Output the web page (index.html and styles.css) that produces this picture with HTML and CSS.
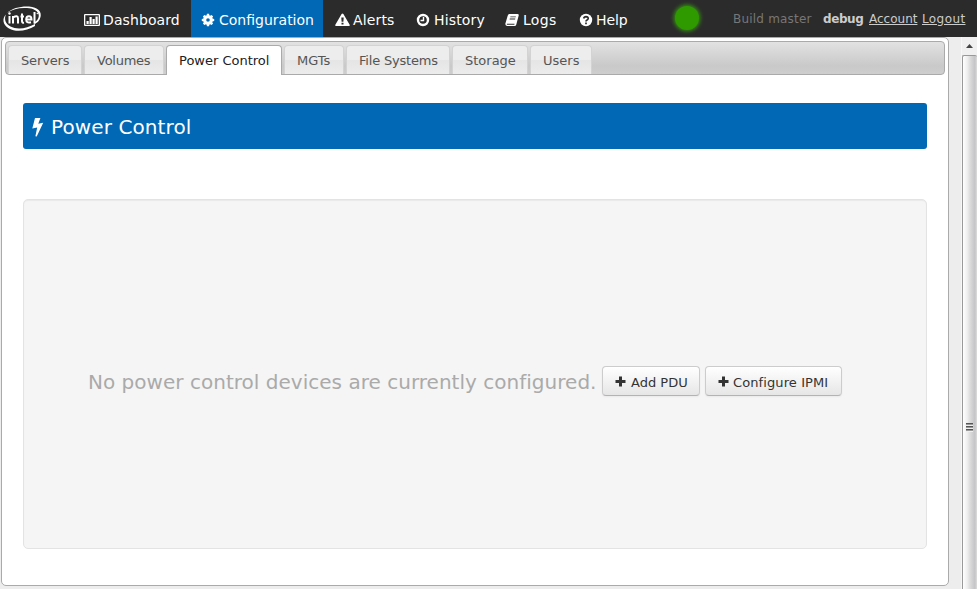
FILE: index.html
```html
<!DOCTYPE html>
<html lang="en">
<head>
<meta charset="utf-8">
<title>Power Control</title>
<link rel="stylesheet" href="styles.css">
</head>
<body>
<header class="navbar">
  <svg class="logo" viewBox="0 0 40 28" width="40" height="28">
    <path d="M5 8C10 3 19 1 27 1.500C36 2 40 7 38.500 12C37.500 16 35 18 32.500 19L32 17.500C35 16 36.500 14 36.800 11C37 6 31 3 25 3C17 2.500 11 4 5 8Z" fill="#fff"/>
    <path d="M4 9.500C0 13 .5 20 7 23.500C14 27.500 25 26 33 21L33 19C25 23.500 15 25 8.500 21.500C3 18.500 2 13.500 4 9.500Z" fill="#fff"/>
    <g fill="none" stroke="#fff" stroke-width="2"><path d="M7.500 11V18.500M11 18.500V11M11 12.500Q16 9.500 16 13.500V18.500M20 8.500V16Q20 18 22 17.700M18.500 11.500H22M24.500 14.500H29.500Q29.500 11.200 27 11.200Q24.200 11.200 24.200 14.500Q24.200 18.500 29 17.200M32.500 7V18.500"/></g><circle cx="7.500" cy="8.500" r="1.200" fill="#fff"/><circle cx="35.300" cy="8.500" r=".7" fill="#fff"/>
  </svg>
  <nav class="menu">
    <a class="item dashboard"><svg width="16" height="14" viewBox="0 0 16 14"><path fill="#fff" fill-rule="evenodd" d="M1 1H15Q16 1 16 2V12Q16 13 15 13H1Q0 13 0 12V2Q0 1 1 1ZM1.300 2.200V11.800H14.700V2.200ZM2.500 8H4.700V11H2.500ZM5.500 4H7.700V11H5.500ZM8.500 6H10.700V11H8.500ZM11.500 3.500H13.700V11H11.500Z"/></svg><span>Dashboard</span></a>
    <a class="item configuration active"><svg width="14" height="14" viewBox="0 0 14 14"><g fill="#fff"><path fill-rule="evenodd" d="M7 2.200A4.800 4.800 0 1 1 7 11.800A4.800 4.800 0 1 1 7 2.200ZM7 5.200A1.800 1.800 0 1 0 7 8.800A1.800 1.800 0 1 0 7 5.200Z"/><path d="M5.600 3L5.900 .8H8.100L8.400 3ZM5.600 11L5.900 13.200H8.100L8.400 11ZM3 5.600L.8 5.900V8.100L3 8.400ZM11 5.600L13.200 5.900V8.100L11 8.400ZM3.100 5.200L1.900 3.400L3.400 1.900L5.200 3.100ZM8.800 3.100L10.600 1.900L12.100 3.400L10.900 5.200ZM10.900 8.800L12.100 10.600L10.600 12.100L8.800 10.900ZM5.200 10.900L3.400 12.100L1.900 10.600L3.100 8.800Z"/></g></svg><span>Configuration</span></a>
    <a class="item alerts"><svg width="15" height="14" viewBox="0 0 15 14"><path fill="#fff" fill-rule="evenodd" d="M6.600 1Q7.500 0 8.400 1L14.800 12Q15 13 14 13H1Q0 13 .2 12ZM6.300 4.500L6.600 8.800H8.400L8.700 4.500ZM6.500 9.700V11.500H8.500V9.700Z"/></svg><span>Alerts</span></a>
    <a class="item history"><svg width="14" height="14" viewBox="0 0 14 14"><circle cx="7" cy="7" r="5" fill="none" stroke="#fff" stroke-width="2.400"/><path d="M7.500 4V7.500H4.500" fill="none" stroke="#fff" stroke-width="1.400"/></svg><span>History</span></a>
    <a class="item logs"><svg width="14" height="14" viewBox="0 0 14 14"><path fill="#fff" fill-rule="evenodd" d="M4 1H12.500Q14 1.200 13.700 2.500L11.300 11.500Q10.900 13 9.500 13H2Q0 12.500 .4 10.500L2.600 3Q3 1.300 4 1ZM5.400 3.500L5.200 4.300H10.700L10.900 3.500ZM4.800 5.600L4.600 6.400H10.100L10.300 5.600ZM1.900 10.700Q1.600 11.600 2.400 11.700H9.300L9.600 10.700Z"/></svg><span>Logs</span></a>
    <a class="item help"><svg width="14" height="14" viewBox="0 0 14 14"><circle cx="7" cy="7" r="6.200" fill="#fff"/><path d="M4.700 5.500Q5 3.600 7 3.600Q9.300 3.700 9.200 5.500Q9.100 6.300 8 7Q7 7.500 7 8.500M7 9.500V11.200" fill="none" stroke="#2b2b2b" stroke-width="1.700"/></svg><span>Help</span></a>
  </nav>
  <i class="status"></i>
  <div class="account"><span class="build">Build master</span><b class="user">debug</b><span class="acct"><a>Account</a></span><a class="logout">Logout</a></div>
</header>
<div class="viewport">
  <main class="panel">
    <div class="tabs">
      <a class="tab servers"><span>Servers</span></a>
      <a class="tab volumes"><span>Volumes</span></a>
      <a class="tab power selected"><span>Power Control</span></a>
      <a class="tab mgts"><span>MGTs</span></a>
      <a class="tab filesystems"><span>File Systems</span></a>
      <a class="tab storage"><span>Storage</span></a>
      <a class="tab users"><span>Users</span></a>
    </div>
    <h1 class="title"><svg width="12" height="20" viewBox="0 0 12 20"><path fill="#fff" d="M3 1H8.400L6.300 6.700L11.200 5.800L4.700 19.500L3.400 19.200L5.200 10.400L.3 11.400Z"/></svg><span>Power Control</span></h1>
    <section class="well">
      <span class="message">No power control devices are currently configured.</span>
      <button class="btn add"><svg width="11" height="11" viewBox="0 0 11 11"><path d="M5.500 .5V10.500M.5 5.500H10.500" stroke="#333" stroke-width="3"/></svg><span>Add PDU</span></button>
      <button class="btn ipmi"><svg width="11" height="11" viewBox="0 0 11 11"><path d="M5.500 .5V10.500M.5 5.500H10.500" stroke="#333" stroke-width="3"/></svg><span>Configure IPMI</span></button>
    </section>
  </main>
  <div class="scrollbar">
    <div class="arrow"><svg width="7" height="4" viewBox="0 0 7 4"><path d="M0 4L3.500 0L7 4Z" fill="#444"/></svg></div>
    <div class="thumb"><div class="grip"></div></div>
  </div>
</div>
</body>
</html>
```

FILE: styles.css
```css
* { box-sizing: border-box; }
body {
  margin: 0;
  width: 977px;
  height: 589px;
  overflow: hidden;
  background: #ededed;
  font: 13px/20px "DejaVu Sans", Verdana, sans-serif;
}
span, a, b { white-space: nowrap; }
svg { flex: none; display: block; }
.navbar { display: flex; height: 37px; background: #2b2b2b; }
.logo { margin: 5px 0 0 2px; }
.menu { display: flex; margin-left: 31px; }
.item {
  display: flex;
  align-items: center;
  gap: 3px;
  height: 37px;
  padding: 2px 0 0 11px;
  color: #fff;
  font-size: 14px;
}
.dashboard { width: 118px; letter-spacing: .1px; }
.configuration { width: 132px; }
.alerts { width: 82px; padding-left: 12px; letter-spacing: .15px; }
.history { width: 89px; letter-spacing: .15px; }
.history span { margin-left: 1px; }
.logs { width: 74px; letter-spacing: .3px; }
.logs span { margin-left: 1px; }
.help { width: 70px; letter-spacing: -.1px; }
.active { background: #0068b5; }
.active svg { margin-left: -1px; }
.active span { margin-left: 1px; }
.status {
  width: 24px;
  height: 24px;
  margin: 6px 0 0 37px;
  border-radius: 50%;
  background: #2f9900;
  box-shadow: 0 0 4px 1px #379c12;
}
.account { display: flex; margin: 9px 0 0 34px; color: #ccc; font-size: 12px; }
.account a { text-decoration: underline; }
.build { width: 90px; color: #777; letter-spacing: .2px; }
.user { width: 46px; letter-spacing: -.4px; }
.acct { width: 53px; }
.logout { letter-spacing: .4px; }
.viewport { display: flex; height: 552px; }
.panel {
  width: 948px;
  height: 549px;
  margin-left: 1px;
  border: 1px solid #aaa;
  border-radius: 5px;
  background: #fff;
  padding: 3px;
}
.tabs {
  display: flex;
  gap: 2px;
  width: 940px;
  height: 34px;
  border: 1px solid #aaa;
  border-radius: 4px;
  background: linear-gradient(#e2e2e2, #c9c9c9 75%, #cecece);
  padding: 3px 2px 0;
}
.tab {
  height: 29px;
  border: 1px solid #d3d3d3;
  border-bottom: 0;
  border-radius: 4px 4px 0 0;
  background: linear-gradient(#ededed 0 48%, #e5e5e5 52%, #ececec);
  padding: 5px 0 0 12px;
  color: #555;
}
.servers { width: 74px; letter-spacing: -.15px; }
.volumes { width: 80px; letter-spacing: -.25px; }
.power { width: 116px; }
.mgts { width: 60px; }
.filesystems { width: 104px; letter-spacing: -.2px; }
.storage { width: 76px; }
.users { width: 62px; }
.selected { height: 30px; border-color: #aaa; background: #fff; color: #212121; }
.title {
  display: flex;
  align-items: center;
  gap: 7px;
  width: 904px;
  height: 46px;
  margin: 28px 0 50px 18px;
  padding: 2px 0 0 9px;
  border-radius: 3px;
  background: #0068b5;
  color: #fff;
  font-size: 20px;
  font-weight: normal;
  letter-spacing: .1px;
}
.well {
  display: flex;
  align-items: center;
  width: 904px;
  height: 350px;
  margin-left: 18px;
  padding: 14px 0 0 64px;
  border: 1px solid #e3e3e3;
  border-radius: 5px;
  background: #f5f5f5;
  box-shadow: inset 0 1px 1px rgba(0, 0, 0, .05);
}
.message { width: 514px; padding-top: 1px; color: #aaa; font-size: 20px; letter-spacing: .02px; }
.btn {
  display: flex;
  align-items: center;
  gap: 5px;
  height: 30px;
  padding: 2px 0 0 12px;
  border: 1px solid #ccc;
  border-bottom-color: #b3b3b3;
  border-radius: 4px;
  background: linear-gradient(#fff, #e6e6e6);
  box-shadow: 0 1px 2px rgba(0, 0, 0, .05);
  color: #333;
  font: inherit;
}
.btn svg { margin-top: -1px; }
.btn span { padding-top: 1px; }
.add { width: 98px; margin-right: 5px; }
.ipmi { width: 137px; letter-spacing: .1px; }
.ipmi span { margin-left: -1px; }
.scrollbar {
  width: 16px;
  height: 552px;
  margin-left: 12px;
  border-left: 1px solid #f7f7f7;
  background: #f0f0f0;
}
.arrow { display: flex; justify-content: center; height: 18px; padding-top: 7px; }
.thumb {
  display: flex;
  align-items: center;
  height: 560px;
  border: 1px solid #999;
  border-radius: 2px;
  border-right: 0;
  background: linear-gradient(90deg, #fff 0, #efefef 30%, #dcdcdc 50%, #c4c4c8 85%, #ddd);
}
.grip {
  width: 7px;
  height: 9px;
  margin: 185px 0 0 3px;
  background: repeating-linear-gradient(#555 0 1px, #999 1px 2px, #eee 2px 3px);
}
```
